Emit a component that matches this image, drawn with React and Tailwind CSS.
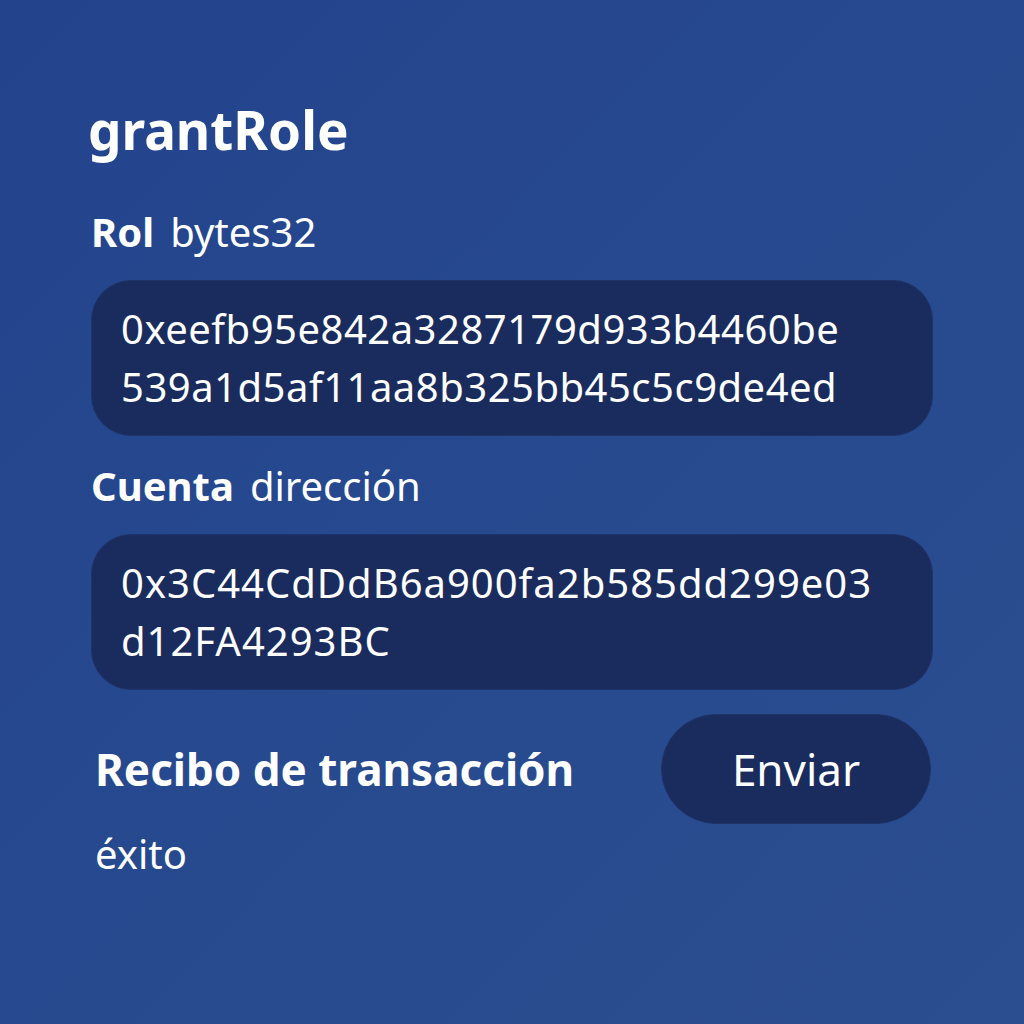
import React from "react";

const hexLines = {
  role: ["0xeefb95e842a3287179d933b4460be", "539a1d5af11aa8b325bb45c5c9de4ed"],
  account: ["0x3C44CdDdB6a900fa2b585dd299e03", "d12FA4293BC"],
};

function Field({ label, type, lines, spacing }) {
  return (
    <div className="flex flex-col">
      <div className="flex items-baseline gap-[16px] text-[40px] leading-[40px] text-white">
        <span className="font-bold">{label}</span>
        <span className="font-normal">{type}</span>
      </div>
      <div className={`mt-[28px] h-[156px] rounded-[40px] bg-[#1a2c5d] border border-[#1f3468] pl-[29px] flex flex-col justify-center text-[40px] leading-[58px] text-white ${spacing}`}>
        {lines.map((l) => (
          <div key={l}>{l}</div>
        ))}
      </div>
    </div>
  );
}

export default function App() {
  return (
    <div
      className="w-[1024px] h-[1024px] bg-gradient-to-br from-[#23448d] to-[#2b4e90] px-[91px] pt-[104px] flex flex-col"
      style={{ fontFamily: '"Noto Sans", "Open Sans", sans-serif' }}
    >
      <h1 className="-ml-[3px] text-[53px] leading-[52px] font-bold text-white">
        grantRole
      </h1>

      <div className="mt-[56px]">
        <Field label="Rol" type="bytes32" lines={hexLines.role} spacing="tracking-[0.5px]" />
      </div>

      <div className="mt-[30px]">
        <Field label="Cuenta" type="dirección" lines={hexLines.account} spacing="tracking-[1px]" />
      </div>

      <div className="mt-[24px] flex items-center justify-between">
        <span className="ml-[4px] text-[44px] font-bold text-white">
          Recibo de transacción
        </span>
        <button className="w-[270px] h-[110px] rounded-full bg-[#1a2c5d] border border-[#1f3468] text-white text-[44px] mr-[2px]">
          Enviar
        </button>
      </div>

      <div className="mt-[10px] ml-[4px] text-[40px] leading-[40px] text-white">
        éxito
      </div>
    </div>
  );
}
